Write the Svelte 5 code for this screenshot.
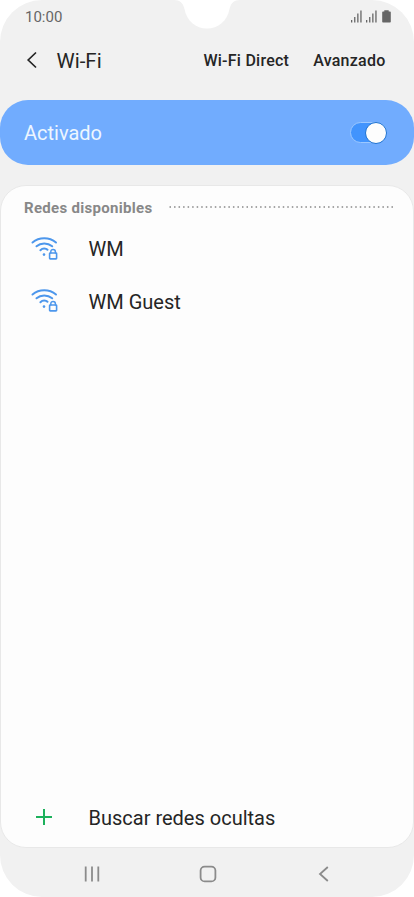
<script lang="ts">
  let enabled = $state(true)

  const networks = ['WM', 'WM Guest']
  const signalBars = [2.5, 5.5, 9, 12]
</script>

{#snippet signal()}
  <svg class="signal" width="12" height="13" viewBox="0 0 12 13" fill="currentColor">
    {#each signalBars as h, i}
      <rect x={1 + i * 3.1} y={12.5 - h} width="1.300" height={h} />
    {/each}
  </svg>
{/snippet}

<div class="phone">
  <svg class="notch" width="70" height="30" viewBox="0 0 70 30" fill="#fff">
    <path d="M2 0C8 0 11 3 12.5 9C14.5 21 24 28.6 35 28.6S55.500 21 57.500 9C59 3 62 0 68 0Z" />
  </svg>

  <div class="status">
    <span class="time">10:00</span>
    <div class="status-icons">
      {@render signal()}
      {@render signal()}
      <svg class="battery" width="9" height="13" viewBox="0 0 9 13" fill="currentColor">
        <path d="M2.300 0.300h4.400v1.200h1.300a.8.8 0 0 1 .8.8v9.400a.8.8 0 0 1-.8.8H1a.8.8 0 0 1-.8-.8V2.300a.8.8 0 0 1 .8-.8h1.300z" />
      </svg>
    </div>
  </div>

  <header>
    <button class="back" aria-label="Atrás">
      <svg width="12" height="18" viewBox="0 0 12 18" fill="none" stroke="currentColor" stroke-width="1.700">
        <path d="M10 1.500L2.200 9l7.800 7.500" />
      </svg>
    </button>
    <h1>Wi-Fi</h1>
    <button class="direct">Wi-Fi Direct</button>
    <button class="advanced">Avanzado</button>
  </header>

  <div class="banner">
    <span class="banner-text">Activado</span>
    <button
      class="switch"
      class:on={enabled}
      role="switch"
      aria-checked={enabled}
      aria-label="Wi-Fi"
      onclick={() => (enabled = !enabled)}
    >
      <span class="knob"></span>
    </button>
  </div>

  <main>
    <div class="section">
      <h2>Redes disponibles</h2>
      <svg class="dots" width="226" height="2" viewBox="0 0 226 2">
        <line x1="0.500" y1="1" x2="226" y2="1" stroke="#888" stroke-width="1.500" stroke-dasharray="1.500 3.030" />
      </svg>
    </div>

    {#each networks as name}
      <button class="row">
        <svg class="wifi" width="27" height="24" viewBox="0 0 27 24" fill="none" stroke="#4d97ec" stroke-width="2" stroke-linecap="round">
          <path d="M1.500 5.500Q6.500 1.300 13.200 1.300T25 5.500" />
          <path d="M5.500 9.300Q8.700 6.500 13.200 6.500T21.200 9.300" />
          <path d="M9.400 13.200Q11 11.600 13.200 11.600T16.500 12.800" />
          <circle cx="13" cy="17.600" r="1.300" fill="#4d97ec" stroke="none" />
          <rect x="18.600" y="16" width="7" height="5.900" rx="0.600" stroke-width="1.600" />
          <path d="M19.800 16v-1.300a2.300 2.300 0 0 1 4.600 0v1.300" stroke-width="1.500" />
        </svg>
        <span class="name">{name}</span>
      </button>
    {/each}

    <button class="row hidden-networks">
      <svg class="plus" width="16" height="16" viewBox="0 0 16 16" stroke="#1db15c" stroke-width="2">
        <path d="M8 0v16M0 8h16" />
      </svg>
      <span class="name">Buscar redes ocultas</span>
    </button>
  </main>

  <nav>
    <button aria-label="Recientes">
      <svg width="16" height="16" viewBox="0 0 16 16" stroke="currentColor" stroke-width="1.800">
        <path d="M1.700 0.500v15M8 0.500v15M14.300 0.500v15" />
      </svg>
    </button>
    <button class="home" aria-label="Inicio">
      <svg width="18" height="18" viewBox="0 0 18 18" fill="none" stroke="currentColor" stroke-width="1.800">
        <rect x="1.600" y="1.600" width="14.800" height="14.800" rx="4" />
      </svg>
    </button>
    <button aria-label="Volver">
      <svg width="12" height="16" viewBox="0 0 12 16" fill="none" stroke="currentColor" stroke-width="1.800">
        <path d="M9.800 1L2 8l7.800 7" />
      </svg>
    </button>
  </nav>
</div>

<style>
  :global(body) {
    background: #fff;
  }

  .phone {
    position: relative;
    display: flex;
    flex-direction: column;
    width: 414px;
    height: 897px;
    border-radius: 42px;
    overflow: hidden;
    background: #f1f1f1;
    color: #252525;
    font-family: Roboto, sans-serif;
  }

  button {
    padding: 0;
    border: none;
    background: none;
    color: inherit;
    font: inherit;
    cursor: pointer;
  }

  svg {
    display: block;
    flex-shrink: 0;
  }

  .notch {
    position: absolute;
    top: 0;
    left: 172px;
  }

  .status {
    display: flex;
    flex-shrink: 0;
    align-items: center;
    justify-content: space-between;
    height: 33px;
    padding: 0 23px 0 25px;
    box-sizing: border-box;
    color: #666;
  }

  .time {
    padding-top: 1px;
    font-size: 15px;
  }

  .status-icons {
    display: flex;
    gap: 3px;
  }

  .battery {
    margin-left: 2px;
  }

  header {
    display: flex;
    flex-shrink: 0;
    align-items: center;
    height: 54px;
    padding: 0 28.5px 0 26px;
  }

  h1 {
    margin: 0 auto 0 18.5px;
    padding-top: 1px;
    font-size: 20.5px;
    font-weight: 400;
  }

  .direct,
  .advanced {
    font-size: 16px;
    font-weight: 500;
    letter-spacing: 0.25px;
  }

  .advanced {
    margin-left: 24px;
  }

  .banner {
    display: flex;
    flex-shrink: 0;
    align-items: center;
    justify-content: space-between;
    height: 64.5px;
    margin: 13.3px 0.3px 20.7px;
    padding: 0 26.7px 0 23.7px;
    box-sizing: border-box;
    border-radius: 28px;
    background: #71acfe;
    color: #edf6ff;
  }

  .banner-text {
    padding-top: 1px;
    font-size: 20px;
  }

  .switch {
    display: flex;
    align-items: center;
    width: 37px;
    height: 21px;
    box-sizing: border-box;
    border: 1px solid #9cc8ff;
    border-radius: 11px;
    background: #a9c4e6;
  }

  .switch.on {
    justify-content: flex-end;
    background: #4294fd;
  }

  .knob {
    flex-shrink: 0;
    width: 22px;
    height: 22px;
    margin-right: -1px;
    box-sizing: border-box;
    border: 1px solid #1c72d2;
    border-radius: 50%;
    background: #fdfdfd;
  }

  main {
    display: flex;
    flex-direction: column;
    flex-shrink: 0;
    height: 663px;
    box-sizing: border-box;
    border: 1px solid #e8e8e8;
    border-radius: 26px;
    background: #fdfdfd;
  }

  .section {
    display: flex;
    align-items: center;
    justify-content: space-between;
    height: 36px;
    padding: 6px 18px 0 23px;
    box-sizing: border-box;
  }

  h2 {
    margin: 0;
    padding-top: 2px;
    color: #888;
    font-size: 15px;
    font-weight: 700;
    letter-spacing: 0.3px;
  }

  .row {
    display: flex;
    align-items: center;
    height: 52.5px;
    padding-left: 30px;
    text-align: left;
  }

  .wifi {
    margin-right: 30.5px;
  }

  .name {
    padding-top: 1px;
    font-size: 20px;
  }

  .hidden-networks {
    margin-top: auto;
    margin-bottom: 4px;
    padding-left: 35px;
  }

  .plus {
    margin-right: 36.5px;
  }

  nav {
    display: flex;
    flex: 1;
    align-items: center;
    justify-content: space-between;
    padding: 2px 84px 0;
    color: #8b8b8b;
  }

  .home {
    margin-right: 3px;
  }
</style>
